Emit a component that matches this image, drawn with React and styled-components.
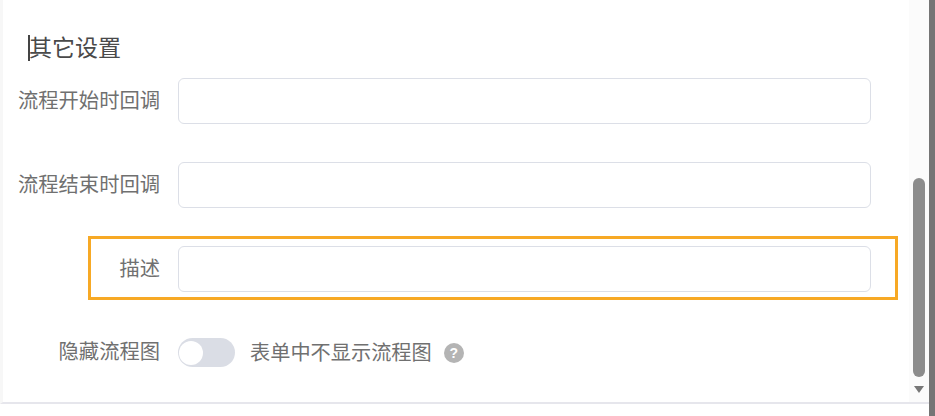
import React from "react";
import styled, { createGlobalStyle } from "styled-components";

const GlobalStyle = createGlobalStyle`
  html, body {
    margin: 0;
    padding: 0;
    background: #fff;
  }
  * {
    box-sizing: border-box;
  }
`;

function App() {
  return (
    <>
      <GlobalStyle />
      <Page>
        <Body>
          <Content>
            <SectionTitle>
              <Caret />
              其它设置
            </SectionTitle>
            <Rows>
              <FormRow>
                <Label>流程开始时回调</Label>
                <TextInput />
              </FormRow>
              <FormRow>
                <Label>流程结束时回调</Label>
                <TextInput />
              </FormRow>
              <FormRow>
                <Highlight />
                <Label>描述</Label>
                <TextInput />
              </FormRow>
              <SwitchRow>
                <Label>隐藏流程图</Label>
                <Switch>
                  <Knob />
                </Switch>
                <Hint>表单中不显示流程图</Hint>
                <HelpIcon>?</HelpIcon>
              </SwitchRow>
            </Rows>
          </Content>
          <ScrollTrack>
            <ScrollThumb />
            <ScrollArrow />
          </ScrollTrack>
        </Body>
        <Edge />
      </Page>
    </>
  );
}

export default App;

const Page = styled.div`
  display: flex;
  width: 935px;
  height: 416px;
  overflow: hidden;
  background: #fff;
  font-family: "Liberation Sans", "Noto Sans CJK SC", sans-serif;
`;
const Body = styled.div`
  flex: 1;
  display: flex;
  height: 404px;
  border-left: 3px solid #f7f7f7;
  border-bottom: 2px solid #e6e6ec;
`;
const Content = styled.div`
  flex: 1;
  padding: 34px 0 0 15px;
`;
const SectionTitle = styled.div`
  position: relative;
  height: 28px;
  padding-left: 11px;
  font-size: 23px;
  line-height: 28px;
  color: #4a4a4a;
`;
const Caret = styled.span`
  position: absolute;
  left: 10px;
  top: 1px;
  width: 2px;
  height: 26px;
  background: #444;
`;
const Rows = styled.div`
  display: flex;
  flex-direction: column;
  gap: 38px;
  margin-top: 16px;
`;
const FormRow = styled.div`
  position: relative;
  display: flex;
  align-items: center;
  gap: 18px;
  height: 46px;
`;
const Highlight = styled.div`
  position: absolute;
  left: 70px;
  top: -10px;
  width: 810px;
  height: 64px;
  border: 3px solid #f7a925;
`;
const Label = styled.label`
  width: 142px;
  padding-bottom: 5px;
  text-align: right;
  white-space: nowrap;
  font-size: 20.3px;
  color: #707070;
`;
const TextInput = styled.div`
  width: 693px;
  height: 46px;
  background: #fff;
  border: 1px solid #dcdfe7;
  border-radius: 6px;
`;
const SwitchRow = styled.div`
  display: flex;
  align-items: center;
  height: 29px;
  margin-top: 8px;
`;
const Switch = styled.div`
  display: flex;
  align-items: center;
  width: 57px;
  height: 29px;
  margin-left: 18px;
  padding-left: 1px;
  border-radius: 15px;
  background: #dadde5;
`;
const Knob = styled.span`
  width: 24px;
  height: 24px;
  border-radius: 50%;
  background: #fff;
`;
const Hint = styled.span`
  margin-left: 15px;
  padding-bottom: 3px;
  white-space: nowrap;
  font-size: 20.2px;
  color: #707070;
`;
const HelpIcon = styled.span`
  width: 20px;
  height: 20px;
  margin-left: 12px;
  border-radius: 50%;
  background: #b4b4b4;
  color: #fff;
  font-size: 14px;
  font-weight: 700;
  line-height: 20px;
  text-align: center;
`;
const ScrollTrack = styled.div`
  position: relative;
  width: 20px;
  background: #fbfbfb;
`;
const ScrollThumb = styled.div`
  position: absolute;
  left: 4px;
  top: 178px;
  width: 12px;
  height: 199px;
  border-radius: 6px;
  background: #8c8c8c;
`;
const ScrollArrow = styled.div`
  position: absolute;
  left: 5px;
  top: 386px;
  border-left: 5px solid transparent;
  border-right: 5px solid transparent;
  border-top: 7px solid #777;
`;
const Edge = styled.div`
  width: 6px;
  height: 416px;
  background: #757575;
`;
